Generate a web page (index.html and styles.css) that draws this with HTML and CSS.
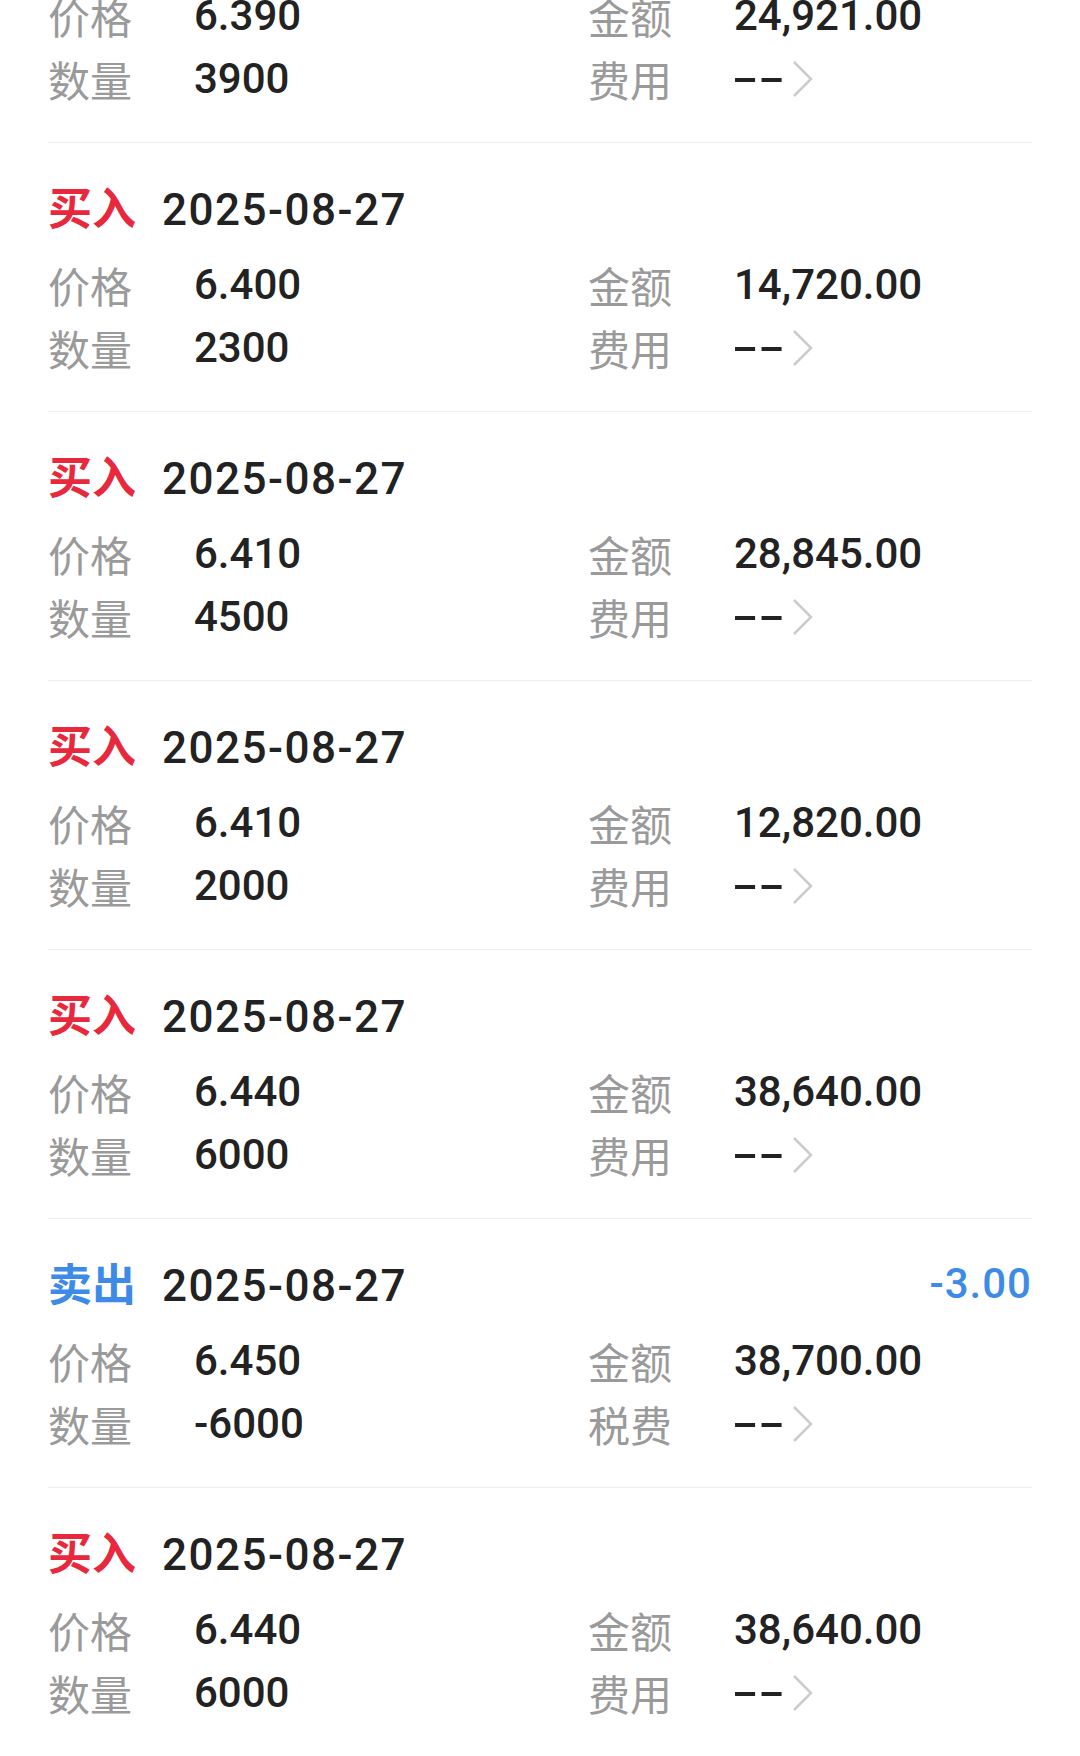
FILE: index.html
```html
<!DOCTYPE html>
<html lang="zh-CN">
<head>
    <meta charset="UTF-8">
    <meta name="viewport" content="width=device-width, initial-scale=1.0">
    <title>成交明细</title>
    <link rel="stylesheet" href="styles.css">
</head>
<body>
    <div class="trade-list">
        <div class="trade">
            <div class="trade-grid">
                <div class="cell"><span class="label">价格</span><span class="value">6.390</span></div>
                <div class="cell"><span class="label">金额</span><span class="value">24,921.00</span></div>
                <div class="cell"><span class="label">数量</span><span class="value">3900</span></div>
                <div class="cell"><span class="label">费用</span><span class="value fee"><span class="dash">--</span><svg class="chevron" viewBox="0 0 22 38"><polyline points="2,2 19,19 2,36"/></svg></span></div>
            </div>
        </div>

        <div class="trade">
            <div class="trade-head">
                <div><span class="side buy">买入</span><span class="date">2025-08-27</span></div>
            </div>
            <div class="trade-grid">
                <div class="cell"><span class="label">价格</span><span class="value">6.400</span></div>
                <div class="cell"><span class="label">金额</span><span class="value">14,720.00</span></div>
                <div class="cell"><span class="label">数量</span><span class="value">2300</span></div>
                <div class="cell"><span class="label">费用</span><span class="value fee"><span class="dash">--</span><svg class="chevron" viewBox="0 0 22 38"><polyline points="2,2 19,19 2,36"/></svg></span></div>
            </div>
        </div>

        <div class="trade">
            <div class="trade-head">
                <div><span class="side buy">买入</span><span class="date">2025-08-27</span></div>
            </div>
            <div class="trade-grid">
                <div class="cell"><span class="label">价格</span><span class="value">6.410</span></div>
                <div class="cell"><span class="label">金额</span><span class="value">28,845.00</span></div>
                <div class="cell"><span class="label">数量</span><span class="value">4500</span></div>
                <div class="cell"><span class="label">费用</span><span class="value fee"><span class="dash">--</span><svg class="chevron" viewBox="0 0 22 38"><polyline points="2,2 19,19 2,36"/></svg></span></div>
            </div>
        </div>

        <div class="trade">
            <div class="trade-head">
                <div><span class="side buy">买入</span><span class="date">2025-08-27</span></div>
            </div>
            <div class="trade-grid">
                <div class="cell"><span class="label">价格</span><span class="value">6.410</span></div>
                <div class="cell"><span class="label">金额</span><span class="value">12,820.00</span></div>
                <div class="cell"><span class="label">数量</span><span class="value">2000</span></div>
                <div class="cell"><span class="label">费用</span><span class="value fee"><span class="dash">--</span><svg class="chevron" viewBox="0 0 22 38"><polyline points="2,2 19,19 2,36"/></svg></span></div>
            </div>
        </div>

        <div class="trade">
            <div class="trade-head">
                <div><span class="side buy">买入</span><span class="date">2025-08-27</span></div>
            </div>
            <div class="trade-grid">
                <div class="cell"><span class="label">价格</span><span class="value">6.440</span></div>
                <div class="cell"><span class="label">金额</span><span class="value">38,640.00</span></div>
                <div class="cell"><span class="label">数量</span><span class="value">6000</span></div>
                <div class="cell"><span class="label">费用</span><span class="value fee"><span class="dash">--</span><svg class="chevron" viewBox="0 0 22 38"><polyline points="2,2 19,19 2,36"/></svg></span></div>
            </div>
        </div>

        <div class="trade">
            <div class="trade-head">
                <div><span class="side sell">卖出</span><span class="date">2025-08-27</span></div>
                <span class="profit">-3.00</span>
            </div>
            <div class="trade-grid">
                <div class="cell"><span class="label">价格</span><span class="value">6.450</span></div>
                <div class="cell"><span class="label">金额</span><span class="value">38,700.00</span></div>
                <div class="cell"><span class="label">数量</span><span class="value">-6000</span></div>
                <div class="cell"><span class="label">税费</span><span class="value fee"><span class="dash">--</span><svg class="chevron" viewBox="0 0 22 38"><polyline points="2,2 19,19 2,36"/></svg></span></div>
            </div>
        </div>

        <div class="trade">
            <div class="trade-head">
                <div><span class="side buy">买入</span><span class="date">2025-08-27</span></div>
            </div>
            <div class="trade-grid">
                <div class="cell"><span class="label">价格</span><span class="value">6.440</span></div>
                <div class="cell"><span class="label">金额</span><span class="value">38,640.00</span></div>
                <div class="cell"><span class="label">数量</span><span class="value">6000</span></div>
                <div class="cell"><span class="label">费用</span><span class="value fee"><span class="dash">--</span><svg class="chevron" viewBox="0 0 22 38"><polyline points="2,2 19,19 2,36"/></svg></span></div>
            </div>
        </div>
    </div>
</body>
</html>
```

FILE: styles.css
```css
:root {
    --buy-color: #e8283c;
    --sell-color: #3d8be6;
    --text-color: #222222;
    --label-color: #9a9a9a;
    --line-color: #eeeeee;
}

* {
    margin: 0;
    padding: 0;
    box-sizing: border-box;
}

body {
    font-family: Roboto, "Noto Sans CJK SC", sans-serif;
    background-color: #ffffff;
    color: var(--text-color);
    overflow: hidden;
}

/* la primera fila queda cortada por arriba (solo se ven precio y cantidad) */
.trade-list {
    margin-top: -16px;
    padding: 0 48px;
}

.trade {
    padding: 35px 0 32px;
    border-bottom: 1px solid var(--line-color);
}

.trade:first-child {
    padding-top: 0;
}

.trade-head {
    display: flex;
    justify-content: space-between;
    align-items: center;
    height: 60px;
    margin-bottom: 15px;
    font-size: 44px;
    line-height: 60px;
}

.side {
    font-family: "Noto Sans CJK SC", sans-serif;
    font-weight: 700;
    margin-right: 26px;
}

.side.buy {
    color: var(--buy-color);
}

.side.sell {
    color: var(--sell-color);
}

.date {
    font-weight: 500;
    letter-spacing: 1.5px;
}

.profit {
    color: var(--sell-color);
    font-size: 42px;
    font-weight: 500;
    letter-spacing: 1px;
}

.trade-grid {
    display: grid;
    grid-template-columns: 540px 1fr;
    grid-auto-rows: 63px;
    font-size: 42px;
    line-height: 63px;
}

.cell {
    display: flex;
    align-items: center;
}

.label {
    width: 146px;
    flex-shrink: 0;
    font-family: "Noto Sans CJK SC", sans-serif;
    color: var(--label-color);
}

.value {
    font-weight: 500;
}

.value.fee {
    display: flex;
    align-items: center;
    gap: 15px;
}

/* el guion de la fuente original es mas ancho */
.dash {
    display: inline-block;
    width: 45px;
    transform: scaleX(1.85);
    transform-origin: left center;
    margin-left: -2px;
}

.chevron {
    width: 22px;
    height: 38px;
    fill: none;
    stroke: #cccccc;
    stroke-width: 2.5;
}
```
